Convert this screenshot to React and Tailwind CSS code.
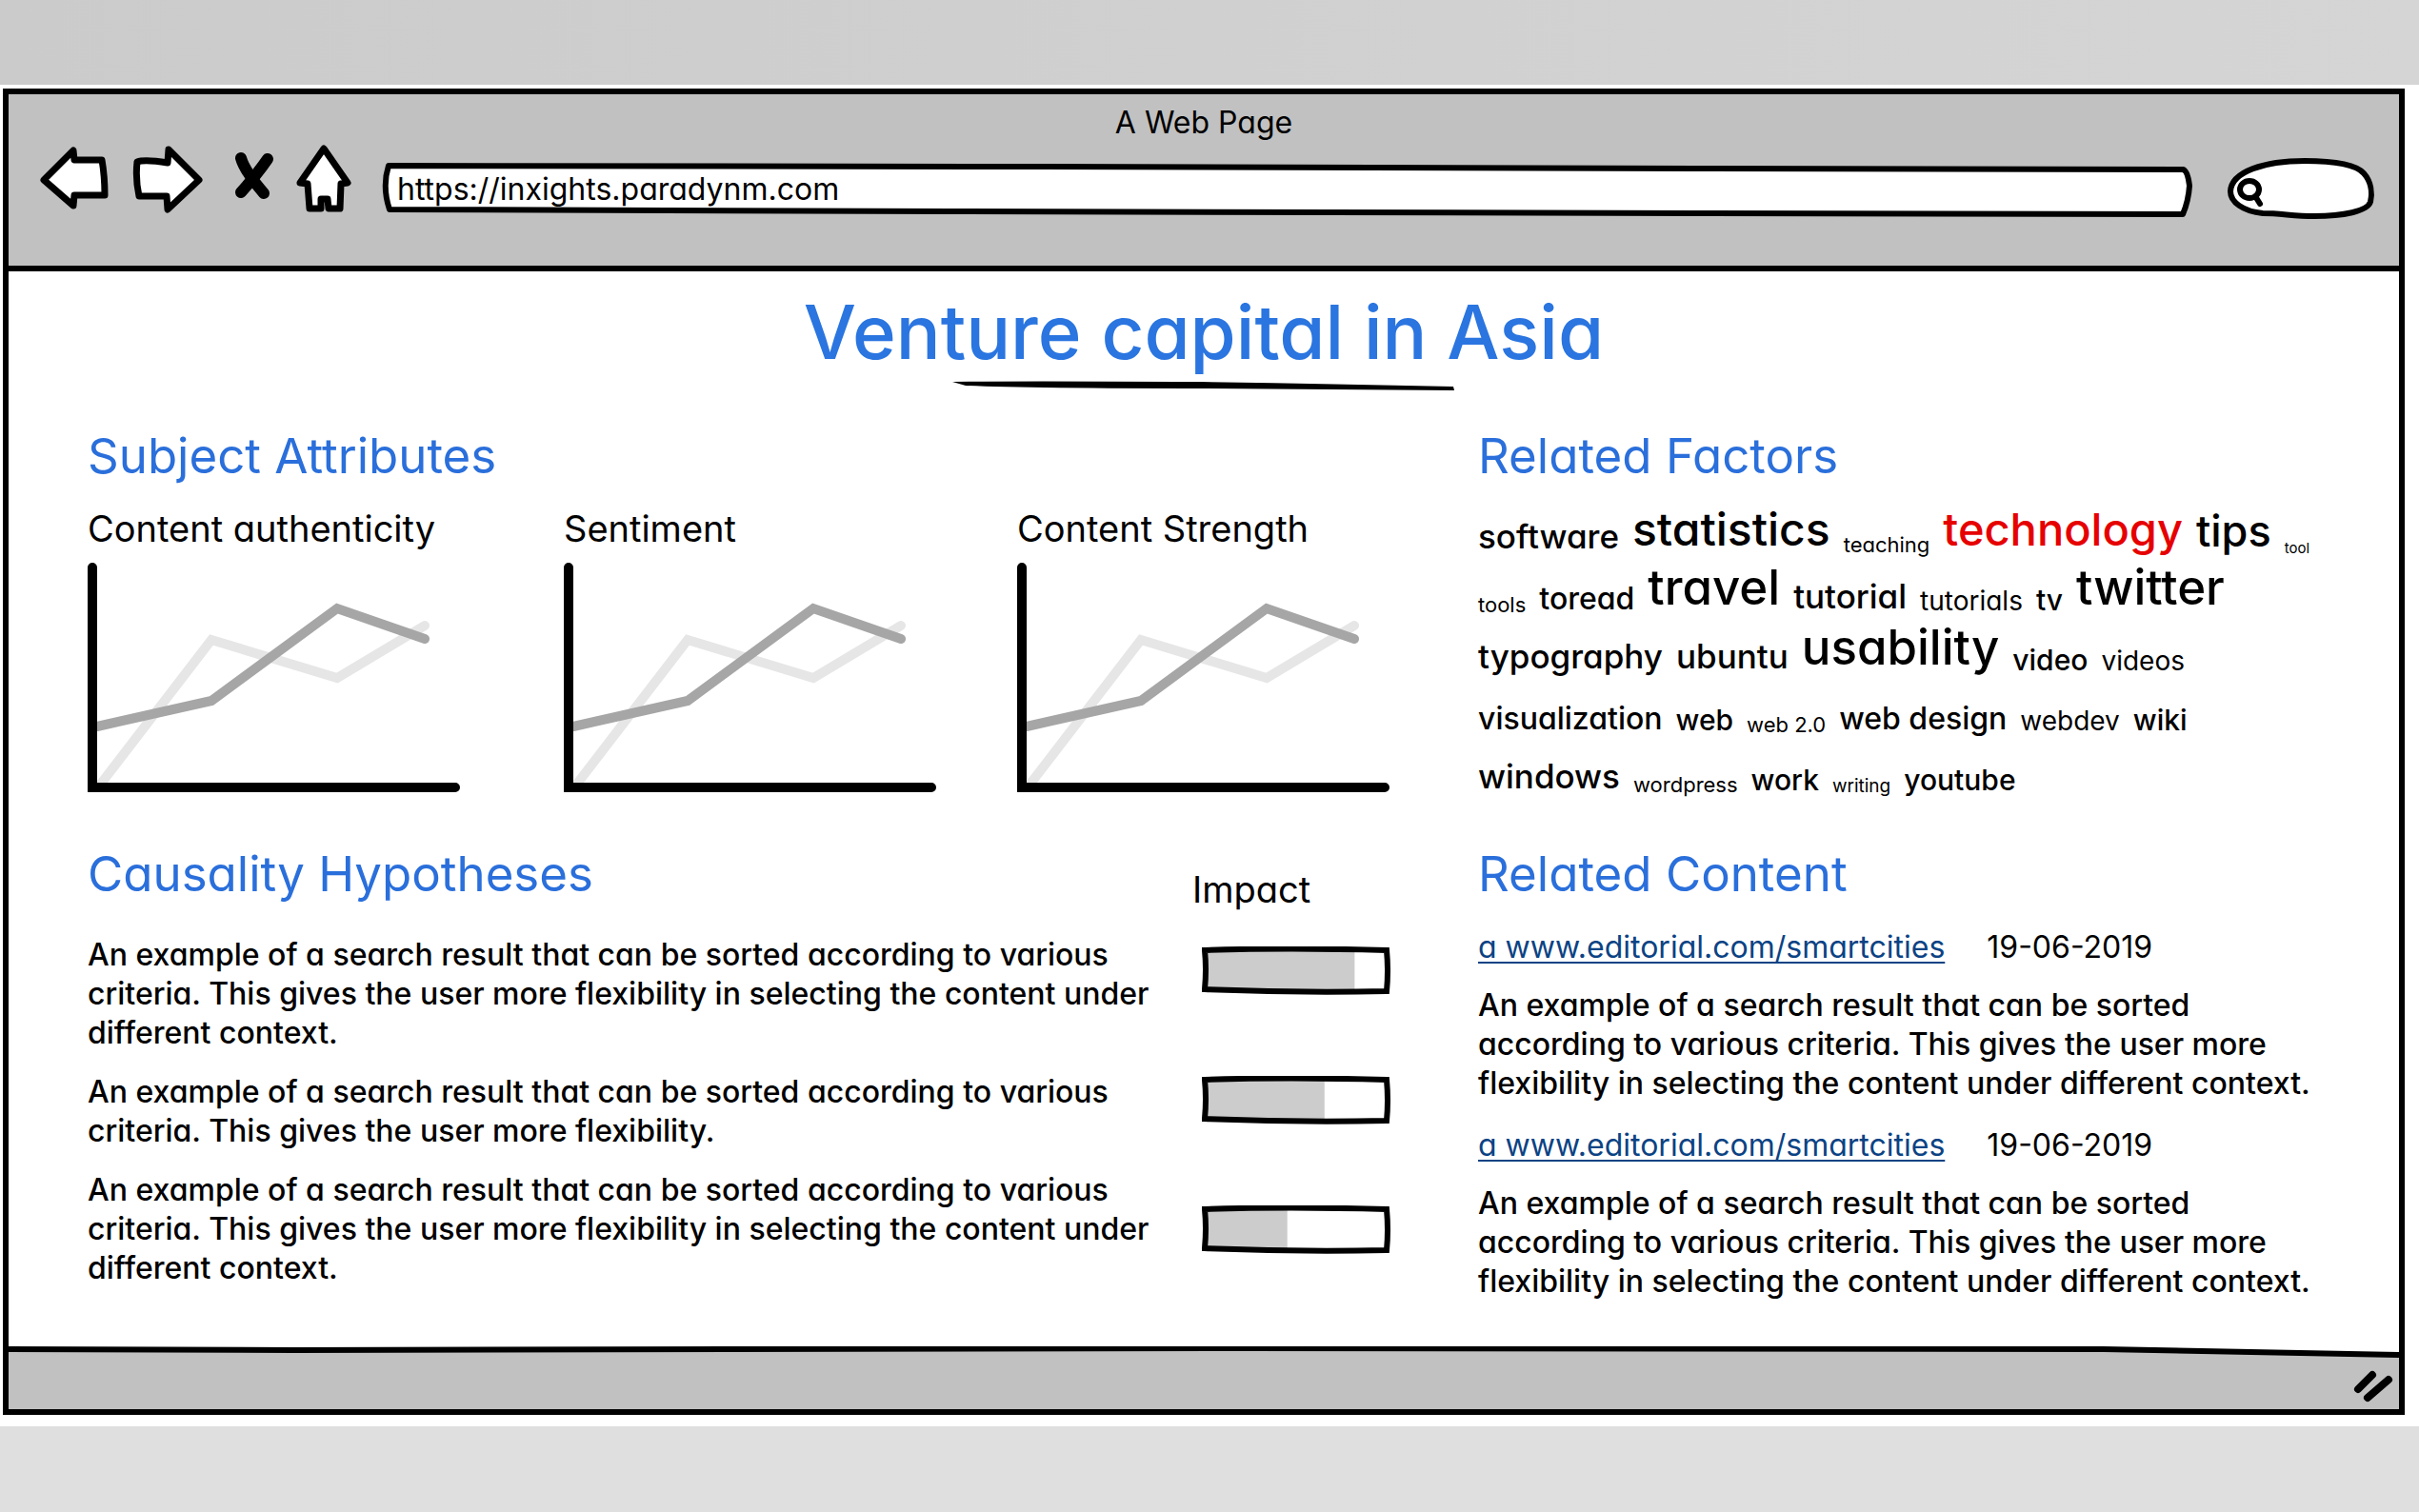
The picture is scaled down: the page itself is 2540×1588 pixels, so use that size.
const CHARTS = ["Content authenticity", "Sentiment", "Content Strength"];

const LONG_TEXT =
  "An example of a search result that can be sorted according to various criteria. This gives the user more flexibility in selecting the content under different context.";
const SHORT_TEXT =
  "An example of a search result that can be sorted according to various criteria. This gives the user more flexibility.";

const HYPOTHESES = [
  { text: LONG_TEXT, impact: 83 },
  { text: SHORT_TEXT, impact: 66 },
  { text: LONG_TEXT, impact: 45 },
];

const CONTENT = [
  { id: 1, url: "a www.editorial.com/smartcities", date: "19-06-2019" },
  { id: 2, url: "a www.editorial.com/smartcities", date: "19-06-2019" },
];

const TAG_SIZES = {
  xxs: "text-[15px]",
  xs: "text-[19px]",
  sm: "text-[22px]",
  md: "text-[28px]",
  base: "text-[30px] font-medium",
  lg: "text-[32px] font-medium",
  xl: "text-[35px] font-medium",
  "2xl": "text-[45px] font-medium",
  "3xl": "text-[48px] font-medium",
  "4xl": "text-[51px] font-medium",
  hot: "text-[47px] font-medium text-[#e60000]",
};

const TAG_ROWS = [
  [["software", "xl"], ["statistics", "3xl"], ["teaching", "sm"], ["technology", "hot"], ["tips", "2xl"], ["tool", "xxs"]],
  [["tools", "sm"], ["toread", "lg"], ["travel", "4xl"], ["tutorial", "xl"], ["tutorials", "md"], ["tv", "base"], ["twitter", "4xl"]],
  [["typography", "xl"], ["ubuntu", "xl"], ["usability", "4xl"], ["video", "base"], ["videos", "md"]],
  [["visualization", "lg"], ["web", "base"], ["web 2.0", "sm"], ["web design", "lg"], ["webdev", "md"], ["wiki", "base"]],
  [["windows", "xl"], ["wordpress", "sm"], ["work", "base"], ["writing", "xs"], ["youtube", "base"]],
];

function NavButton({ label, className, viewBox, children }) {
  return (
    <button type="button" aria-label={label} className={`h-20 shrink-0 ${className}`}>
      <svg viewBox={viewBox} className="size-full" fill="#fff" stroke="#000" strokeWidth="7" strokeLinejoin="round" strokeLinecap="round">
        {children}
      </svg>
    </button>
  );
}

function Toolbar() {
  return (
    <div className="flex items-center gap-4 pl-7 pr-[22px]">
      <NavButton label="Back" className="w-20" viewBox="37 151 80 80">
        <path d="M46 189 L77 158 L78 168 L107 168 Q110 185 110 205 L78 205 L77 216 Z" />
      </NavButton>
      <NavButton label="Forward" className="w-20" viewBox="133 151 80 80">
        <path d="M144 170 Q152 167 176 171 L177 157 L209 189 L176 220 L175 206 L146 206 Q142 188 144 170 Z" />
      </NavButton>
      <NavButton label="Stop" className="w-16" viewBox="229 151 64 80">
        <path d="M253 166 Q257 180 277 203" strokeWidth="12" fill="none" />
        <path d="M281 167 Q270 183 253 202" strokeWidth="12" fill="none" />
      </NavButton>
      <NavButton label="Home" className="w-16" viewBox="309 151 64 80">
        <path d="M340 156 L365 192 L358 193 L357 219 L345 219 L344 209 L337 209 L337 219 L325 219 L323 193 L315 192 Z" />
      </NavButton>

      <div className="relative ml-2 h-20 min-w-0 flex-1">
        <svg viewBox="0 0 1908 80" preserveAspectRatio="none" className="absolute inset-0 size-full" aria-hidden="true">
          <path
            d="M11 23 L700 24 L1400 26 L1895 27 Q1900 28 1902 44 Q1901 60 1895 74 L1400 73 L600 71 L12 69 Q4 45 11 23 Z"
            fill="#fff"
            stroke="#000"
            strokeWidth="6"
            strokeLinejoin="round"
          />
        </svg>
        <input
          type="text"
          aria-label="Address"
          defaultValue="https://inxights.paradynm.com"
          className="relative mt-6 h-12 w-full bg-transparent pl-5 text-[32px] outline-none"
        />
      </div>

      <div className="relative ml-4 h-20 w-40 shrink-0">
        <svg viewBox="2337 151 160 80" className="absolute inset-0 size-full" aria-hidden="true">
          <path
            d="M2342 201 C2343 180 2378 169 2420 169 C2450 169 2474 173 2482 182 C2490 191 2491 203 2489 212 C2486 222 2460 227 2430 227 C2408 227 2395 224 2376 224 C2355 222 2342 212 2342 201 Z"
            fill="#fff"
            stroke="#000"
            strokeWidth="6"
          />
          <path d="M2372 199 A10 9 0 1 1 2352 199 A10 9 0 1 1 2372 199 M2368 206 L2373 214" fill="none" stroke="#000" strokeWidth="6" strokeLinecap="round" />
        </svg>
        <input type="text" aria-label="Search" className="relative mt-6 h-12 w-full bg-transparent pl-12 pr-4 text-[28px] outline-none" />
      </div>
    </div>
  );
}

function LineChart({ label }) {
  return (
    <figure>
      <figcaption className="text-[38px] leading-12">{label}</figcaption>
      <svg viewBox="0 0 392 242" className="mt-3 w-[392px] max-w-full" role="img" aria-label={label} fill="none" strokeWidth="10" strokeLinecap="round">
        <path d="M14 232 L130 81 L262 121 L354 66" stroke="#e6e6e6" />
        <path d="M10 172 L130 145 L262 48 L354 80" stroke="#a6a6a6" />
        <path d="M5 5 V236 H386" stroke="#000" strokeLinejoin="miter" />
      </svg>
    </figure>
  );
}

function ImpactBar({ value }) {
  return (
    <svg viewBox="0 0 198 51" className="h-[51px] w-[198px]" role="progressbar" aria-label="Impact" aria-valuenow={value} aria-valuemin={0} aria-valuemax={100}>
      <rect x="6" y="5" width={(value * 186) / 100} height="40" fill="#ccc" />
      <path d="M3 4 Q90 1 194 4 Q196 26 194 47 Q100 49 3 45 Q5 24 3 4 Z" fill="none" stroke="#000" strokeWidth="6" />
    </svg>
  );
}

function SectionTitle({ children }) {
  return <h2 className="text-[51px] leading-16 text-[#2a6fdb]">{children}</h2>;
}

function SubjectAttributes() {
  return (
    <section>
      <SectionTitle>Subject Attributes</SectionTitle>
      <div className="mt-5 grid grid-cols-[500fr_476fr_392fr]">
        {CHARTS.map((label) => (
          <LineChart key={label} label={label} />
        ))}
      </div>
    </section>
  );
}

function RelatedFactors() {
  return (
    <section>
      <SectionTitle>Related Factors</SectionTitle>
      <div className="mt-3">
        {TAG_ROWS.map((row) => (
          <ul key={row[0][0]} className="flex h-[63px] items-end gap-3.5 leading-tight whitespace-nowrap">
            {row.map(([tag, size]) => (
              <li key={tag} className={TAG_SIZES[size]}>{tag}</li>
            ))}
          </ul>
        ))}
      </div>
    </section>
  );
}

function CausalityHypotheses() {
  return (
    <section className="flex justify-between">
      <div className="w-[1140px]">
        <SectionTitle>Causality Hypotheses</SectionTitle>
        <div className="mt-8 flex flex-col gap-[21px] text-[32px] leading-[41px] font-medium">
          {HYPOTHESES.map((item) => (
            <p key={item.impact}>{item.text}</p>
          ))}
        </div>
      </div>
      <div className="flex w-52 flex-col pt-6">
        <h3 className="text-[38px] leading-12">Impact</h3>
        <div className="mt-9 flex flex-col items-end gap-[85px]">
          {HYPOTHESES.map((item) => (
            <ImpactBar key={item.impact} value={item.impact} />
          ))}
        </div>
      </div>
    </section>
  );
}

function RelatedContent() {
  return (
    <section>
      <SectionTitle>Related Content</SectionTitle>
      <div className="mt-6 flex flex-col gap-6 text-[32px] leading-[41px]">
        {CONTENT.map((item) => (
          <article key={item.id}>
            <div className="flex gap-11">
              <a href="#" className="text-[#0b4384] underline decoration-2 underline-offset-4">{item.url}</a>
              <time>{item.date}</time>
            </div>
            <p className="mt-5 font-medium">{LONG_TEXT}</p>
          </article>
        ))}
      </div>
    </section>
  );
}

export default function App() {
  return (
    <div className="flex min-h-screen flex-col bg-[#dfdfdf] font-['Inter',sans-serif] text-black [font-feature-settings:'cv11']">
      <div className="h-[89px] bg-linear-to-r from-[#cbcbcb] to-[#d5d5d5]" />

      <div className="bg-white pt-1 pr-[15px] pb-3 pl-[3px]">
        <div className="border-[6px] border-black">
          <header className="h-[186px] border-b-[6px] border-black bg-[#c1c1c1] pt-2">
            <p className="text-center text-[32px] leading-11">A Web Page</p>
            <Toolbar />
          </header>

          <main className="pt-4 pb-12">
            <div className="flex flex-col items-center">
              <h1 className="text-[78px] leading-24 font-medium text-[#2a75e0]">Venture capital in Asia</h1>
              <svg viewBox="0 0 528 16" className="h-4 w-[528px]" aria-hidden="true">
                <path d="M0 4 Q60 3 260 4 Q400 6 526 9 L527 13 Q400 12 270 11 Q80 11 14 8 Z" />
              </svg>
            </div>

            <div className="mt-[34px] grid grid-cols-[1368fr_899fr] gap-x-[92px] gap-y-12 pr-[68px] pl-[83px]">
              <SubjectAttributes />
              <RelatedFactors />
              <CausalityHypotheses />
              <RelatedContent />
            </div>
          </main>

          <footer className="bg-[#c1c1c1]">
            <svg viewBox="0 0 2510 12" preserveAspectRatio="none" className="block h-3 w-full" aria-hidden="true">
              <path d="M0 0 H2510 V9 L2200 3 L300 4 L0 3 Z" fill="#fff" />
              <path d="M0 3 L300 4 L1300 2 L2200 3 L2510 9" fill="none" stroke="#000" strokeWidth="6" />
            </svg>
            <div className="flex h-[54px] justify-end pr-1">
              <svg viewBox="2469 1426 46 53" className="h-[53px] w-[46px]" stroke="#000" strokeWidth="8" strokeLinecap="round" aria-hidden="true">
                <path d="M2476 1459 L2491 1444 M2486 1468 L2508 1449" />
              </svg>
            </div>
          </footer>
        </div>
      </div>

      <div className="flex-1" />
    </div>
  );
}
